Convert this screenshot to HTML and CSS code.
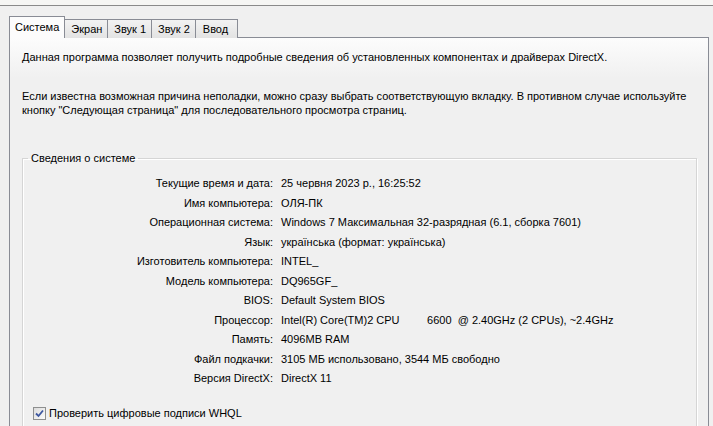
FILE: index.html
```html
<!DOCTYPE html>
<html>
<head>
    <title>Средство диагностики DirectX</title>
    <link rel="stylesheet" href="styles.css">
</head>
<body>
    <div class="topbar"></div>

    <div class="tabs">
        <div class="tab active">Система</div>
        <div class="tab">Экран</div>
        <div class="tab">Звук 1</div>
        <div class="tab">Звук 2</div>
        <div class="tab last">Ввод</div>
    </div>

    <div class="panel">
        <p class="intro">Данная программа позволяет получить подробные сведения об установленных компонентах и драйверах DirectX.</p>
        <p class="hint">Если известна возможная причина неполадки, можно сразу выбрать соответствующую вкладку. В противном случае используйте кнопку "Следующая страница" для последовательного просмотра страниц.</p>

        <fieldset class="sysinfo">
            <legend>Сведения о системе</legend>
            <div class="rows">
                <div class="label">Текущие время и дата:</div><div class="value">25 червня 2023 р., 16:25:52</div>
                <div class="label">Имя компьютера:</div><div class="value">ОЛЯ-ПК</div>
                <div class="label">Операционная система:</div><div class="value">Windows 7 Максимальная 32-разрядная (6.1, сборка 7601)</div>
                <div class="label">Язык:</div><div class="value">українська (формат: українська)</div>
                <div class="label">Изготовитель компьютера:</div><div class="value">INTEL_</div>
                <div class="label">Модель компьютера:</div><div class="value">DQ965GF_</div>
                <div class="label">BIOS:</div><div class="value">Default System BIOS</div>
                <div class="label">Процессор:</div><div class="value">Intel(R) Core(TM)2 CPU         6600  @ 2.40GHz (2 CPUs), ~2.4GHz</div>
                <div class="label">Память:</div><div class="value">4096MB RAM</div>
                <div class="label">Файл подкачки:</div><div class="value">3105 МБ использовано, 3544 МБ свободно</div>
                <div class="label">Версия DirectX:</div><div class="value">DirectX 11</div>
            </div>
            <label class="check">
                <span class="box">
                    <svg width="9" height="9" viewBox="0 0 9 9">
                        <path d="M1 4.5 L3.5 7 L8 1.5" fill="none" stroke="#3d57a0" stroke-width="1.8"/>
                    </svg>
                </span>
                Проверить цифровые подписи WHQL
            </label>
        </fieldset>
    </div>
</body>
</html>
```

FILE: styles.css
```css
body {
    margin: 0;
    width: 713px;
    height: 426px;
    overflow: hidden;
    background-color: #f0f0f0;
    font-family: "Liberation Sans", Arial, sans-serif;
    font-size: 11px;
    color: #000;
}

.topbar {
    height: 5px;
    background-color: #f6f6f4;
    border-bottom: 1px solid #8a8a8a;
}

.tabs {
    display: flex;
    margin-top: 11px;
    margin-left: 11px;
    height: 20px;
    align-items: flex-end;
    position: relative;
    z-index: 1;
}

.tab {
    height: 18px;
    line-height: 18px;
    padding: 0 5px 0 6px;
    border: 1px solid #898c95;
    border-bottom: none;
    border-left: none;
    background: linear-gradient(#f2f2f2, #e3e3e3);
    margin-bottom: -1px;
}

.tab.last {
    padding: 0 9px 0 7px;
}

.tab.active {
    height: 21px;
    line-height: 20px;
    padding: 0 5px;
    border-left: 1px solid #898c95;
    background-color: #fcfcfc;
    background-image: none;
    margin-left: -2px;
    margin-bottom: -1px;
}

.panel {
    margin: 0 4px 0 9px;
    border: 1px solid #898c95;
    background: linear-gradient(#fcfcfc, #f0f0f0 40px);
    padding: 12px 11px 0 12px;
    height: 400px;
}

.intro,
.hint {
    margin: 0;
    line-height: 14px;
}

.hint {
    margin-top: 25px;
}

.sysinfo {
    margin: 34px 0 0 0;
    padding: 9px 0 60px 0;
    border: 1px solid #d5d5d5;
    box-shadow: inset 1px 1px 0 #fff, 1px 1px 0 #fff;
}

.sysinfo legend {
    margin-left: 5px;
    padding: 0 3px;
    line-height: 14px;
}

.rows {
    display: grid;
    grid-template-columns: 250px 1fr;
    column-gap: 8px;
    row-gap: 0;
}

.label,
.value {
    height: 19.5px;
    line-height: 19.5px;
    white-space: pre;
}

.label {
    text-align: right;
}

.check {
    display: flex;
    align-items: center;
    margin-top: 18px;
    margin-left: 10px;
    gap: 3px;
}

.box {
    width: 11px;
    height: 11px;
    border: 1px solid #8e8f8f;
    background: linear-gradient(135deg, #dcdcdc, #fbfbfb);
    display: flex;
    align-items: center;
    justify-content: center;
}
```
